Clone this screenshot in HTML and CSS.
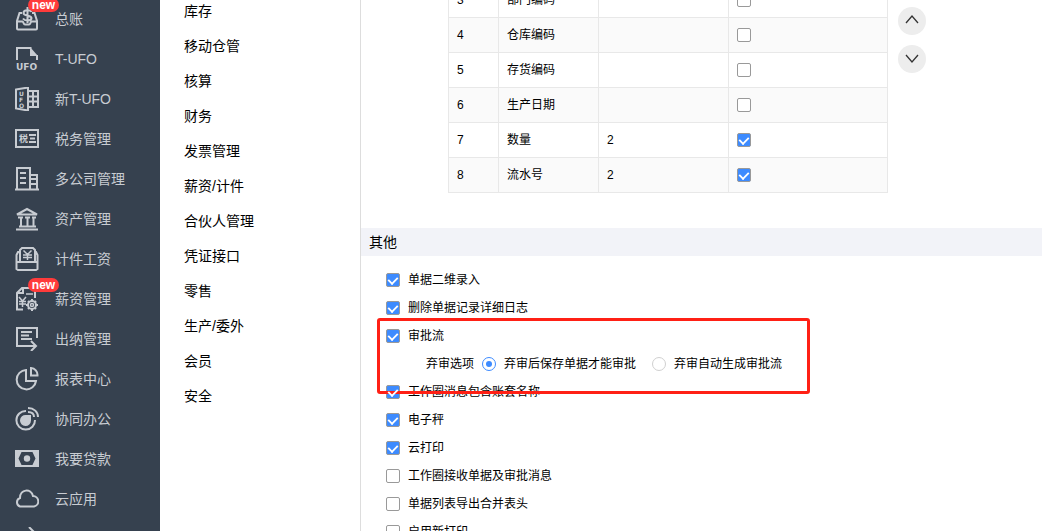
FILE: index.html
```html
<!DOCTYPE html>
<html lang="zh-CN">
<head>
    <meta charset="UTF-8">
    <meta name="viewport" content="width=device-width, initial-scale=1.0">
    <title>选项设置</title>
    <link rel="stylesheet" href="styles.css">
</head>
<body>

<div class="app">
    <nav class="sidebar">
        <a href="#">
            <svg viewBox="0 0 24 24"><path d="M7 6H4.500L2 14v7.500a1 1 0 0 0 1 1h18a1 1 0 0 0 1-1V14L19.500 6H17M2 14.500h5.500c1 0 1 3 2.500 3h4c1.500 0 1.500-3 2.500-3H22M16.500 5c-1-2.500-8-2.500-8 1s8 2 8 5-6.500 3.500-8.500 .5M12.500 0v16"/></svg>
            <span>总账</span>
            <em class="badge">new</em>
        </a>
        <a href="#">
            <svg viewBox="0 0 24 24"><path d="M2 13V1h14.500M22 8v5"/><path class="fill" d="M15 0l8 9h-8z"/><text x="1" y="23">UFO</text></svg>
            <span>T-UFO</span>
        </a>
        <a href="#">
            <svg viewBox="0 0 24 24"><path d="M1 2.500l12-2v23l-12-2zM13 4h10v16H13M13 9.500h10M13 14.500h10M18 4v16"/><text class="tiny" x="4" y="9">U</text><text class="tiny" x="4" y="15">F</text><text class="tiny" x="4" y="21">O</text></svg>
            <span>新T-UFO</span>
        </a>
        <a href="#">
            <svg viewBox="0 0 24 24"><path d="M1 3h22v17H1zM14 8h7M15 11.500h5M14 15h7"/><text class="tax" x="4" y="15">税</text></svg>
            <span>税务管理</span>
        </a>
        <a href="#">
            <svg viewBox="0 0 24 24"><path d="M0 22.500h24M2 22V1h13v21M15 8h7v14M5 6h6M5 11h6M5 16h6M16 12h5M16 17h5"/></svg>
            <span>多公司管理</span>
        </a>
        <a href="#">
            <svg viewBox="0 0 24 24"><path d="M2 7.500L12 2l10 5.500zM3 10.500h5M10 10.500h5M17 10.500h4M6 11v9M12.500 11v9M18.500 11v9M4 19.500h17M1 22.500h22"/></svg>
            <span>资产管理</span>
        </a>
        <a href="#">
            <svg viewBox="0 0 24 24"><path d="M5 15V3l2-2h11l2 2v12M5 5H3l-1.500 3v14L3 23h18l1.500-1V8L21 5h-1M1.500 15h21"/><path class="thin" d="M8.500 3.500l4 4 4-4M12.500 7.500V13M8 8h9M8 10.500h9"/></svg>
            <span>计件工资</span>
        </a>
        <a href="#">
            <svg viewBox="0 0 24 24"><path d="M8 22.500H2V6l5-5h13v10M8 1v5H2"/><path class="thin" d="M11 7h7M4 10l3.500 4 3.500-4M7.500 14v6M4 14.500h7M4 17h7"/><circle class="thin" cx="17" cy="18" r="1.500"/><circle cx="17" cy="18" r="4"/><path d="M17 12v2M17 22v2M11 18h2M21 18h2M13 14l1 1M20 21l1 1M21 14l-1 1M14 21l-1 1"/></svg>
            <span>薪资管理</span>
            <em class="badge">new</em>
        </a>
        <a href="#">
            <svg viewBox="0 0 24 24"><path d="M22 11V1H2v18h18M16 14l5 5-5 5M6 5h11M6 8.500h8M6 12h11"/></svg>
            <span>出纳管理</span>
        </a>
        <a href="#">
            <svg viewBox="0 0 24 24"><path d="M11 3a9.700 9.700 0 1 0 10 11H11zM16 1v7.500h6.500A7 7 0 0 0 16 1z"/></svg>
            <span>报表中心</span>
        </a>
        <a href="#">
            <svg viewBox="0 0 24 24"><path d="M11 4a9.300 9.300 0 1 0 9 9M13 1c6 0 10 4 10 9M13 5c4 0 6 2 6 5"/><path class="fill" d="M11 8h5v5.500A5.500 5.500 0 1 1 11 8z"/></svg>
            <span>协同办公</span>
        </a>
        <a href="#">
            <svg viewBox="0 0 24 24"><path d="M1 4h22v15H1z"/><path class="fill" d="M1 4h6l-3.500 7.500L7 19H1zM23 4h-6l3.500 7.500L17 19h6z"/><circle class="fill" cx="12" cy="11.500" r="3.200"/></svg>
            <span>我要贷款</span>
        </a>
        <a href="#">
            <svg viewBox="0 0 24 24"><path d="M5 19.500a4.500 4.500 0 0 1 0-8.500C5 2 16 1 18 9a5.300 5.300 0 0 1 1 10.500z"/></svg>
            <span>云应用</span>
        </a>
        <a href="#">
            <svg viewBox="0 0 24 24"><path d="M2 15c2-8 8-10 17-10M14 0l5 5-5 5"/></svg>
        </a>
    </nav>

    <nav class="submenu">
        <a href="#">库存</a>
        <a href="#">移动仓管</a>
        <a href="#">核算</a>
        <a href="#">财务</a>
        <a href="#">发票管理</a>
        <a href="#">薪资/计件</a>
        <a href="#">合伙人管理</a>
        <a href="#">凭证接口</a>
        <a href="#">零售</a>
        <a href="#">生产/委外</a>
        <a href="#">会员</a>
        <a href="#">安全</a>
    </nav>

    <main class="content">
        <section class="rules">
            <table>
                <tr>
                    <td class="col-no">3</td>
                    <td class="col-name">部门编码</td>
                    <td class="col-len"></td>
                    <td><input type="checkbox" aria-label="部门编码"></td>
                </tr>
                <tr>
                    <td>4</td>
                    <td>仓库编码</td>
                    <td></td>
                    <td><input type="checkbox" aria-label="仓库编码"></td>
                </tr>
                <tr>
                    <td>5</td>
                    <td>存货编码</td>
                    <td></td>
                    <td><input type="checkbox" aria-label="存货编码"></td>
                </tr>
                <tr>
                    <td>6</td>
                    <td>生产日期</td>
                    <td></td>
                    <td><input type="checkbox" aria-label="生产日期"></td>
                </tr>
                <tr>
                    <td>7</td>
                    <td>数量</td>
                    <td>2</td>
                    <td><input type="checkbox" aria-label="数量" checked></td>
                </tr>
                <tr>
                    <td>8</td>
                    <td>流水号</td>
                    <td>2</td>
                    <td><input type="checkbox" aria-label="流水号" checked></td>
                </tr>
            </table>
            <div class="move">
                <button type="button" aria-label="上移"><svg viewBox="0 0 14 14"><path d="M1 10l6-7 6 7"/></svg></button>
                <button type="button" aria-label="下移"><svg viewBox="0 0 14 14"><path d="M1 4l6 7 6-7"/></svg></button>
            </div>
        </section>

        <h2>其他</h2>
        <form class="options">
            <label><input type="checkbox" checked>单据二维录入</label>
            <label><input type="checkbox" checked>删除单据记录详细日志</label>
            <div class="approval">
                <label><input type="checkbox" checked>审批流</label>
                <div class="radios" role="radiogroup" aria-labelledby="abandon">
                    <span id="abandon">弃审选项</span>
                    <label><input type="radio" name="abandon" checked>弃审后保存单据才能审批</label>
                    <label><input type="radio" name="abandon">弃审自动生成审批流</label>
                </div>
                <div class="highlight"></div>
            </div>
            <label><input type="checkbox" checked>工作圈消息包含账套名称</label>
            <label><input type="checkbox" checked>电子秤</label>
            <label><input type="checkbox" checked>云打印</label>
            <label><input type="checkbox">工作圈接收单据及审批消息</label>
            <label><input type="checkbox">单据列表导出合并表头</label>
            <label><input type="checkbox">启用新打印</label>
        </form>
    </main>
</div>

</body>
</html>
```
FILE: styles.css
```css
* {
    box-sizing: border-box;
}

body {
    margin: 0;
    font-family: "Liberation Sans", "Noto Sans CJK SC", sans-serif;
    font-size: 12px;
    color: #000;
    background: #fff;
}

a {
    color: inherit;
    text-decoration: none;
}

.app {
    display: flex;
    height: 100vh;
    overflow: hidden;
}

/* left navigation */
.sidebar {
    flex: none;
    width: 160px;
    margin-top: -1px;
    background: #36414f;
    color: #c8ccd2;
    font-size: 14px;
    line-height: 38px;
}

.sidebar a {
    position: relative;
    display: flex;
    align-items: center;
    gap: 16px;
    height: 40px;
    padding-left: 15px;
}

.sidebar svg {
    flex: none;
    width: 24px;
    height: 24px;
    fill: none;
    stroke: #c8ccd2;
    stroke-width: 2;
}

.sidebar .thin {
    stroke-width: 1.5;
}

.sidebar .fill {
    fill: #c8ccd2;
    stroke: none;
}

.sidebar text {
    fill: #c8ccd2;
    stroke: none;
    font-family: "DejaVu Sans", sans-serif;
    font-size: 9px;
    font-weight: bold;
}

.sidebar .tiny {
    font-size: 6px;
}

.sidebar .tax {
    font-family: "Noto Sans CJK SC", sans-serif;
    font-size: 9px;
}

.badge {
    position: absolute;
    top: -1px;
    left: 28px;
    width: 31px;
    height: 14px;
    border-radius: 7px;
    background: #ff3b3b;
    color: #fff;
    font-size: 12px;
    font-style: normal;
    font-weight: bold;
    line-height: 14px;
    text-align: center;
}

/* second level menu */
.submenu {
    flex: none;
    width: 201px;
    padding-left: 24px;
    border-right: 1px solid #ddd;
    font-size: 14px;
}

.submenu a {
    display: block;
    line-height: 35px;
}

.submenu a:first-child {
    margin-top: -6px;
}

.content {
    flex: 1;
    min-width: 0;
}

/* encoding rules */
.rules {
    display: flex;
    gap: 10px;
    margin-left: 87px;
}

.rules table {
    width: 440px;
    margin-top: -18px;
    border-collapse: collapse;
    table-layout: fixed;
}

.rules td {
    height: 35px;
    padding: 0 8px;
    border: 1px solid #e8e8e8;
    line-height: 32px;
}

.rules tr:nth-child(even) {
    background: #fafafa;
}

.rules .col-no {
    width: 50px;
}

.rules .col-name {
    width: 100px;
}

.rules .col-len {
    width: 130px;
}

.move {
    display: flex;
    flex-direction: column;
    gap: 10px;
    padding-top: 7px;
}

.move button {
    display: grid;
    place-content: center;
    width: 28px;
    height: 28px;
    padding: 0 0 2px;
    border: none;
    border-radius: 50%;
    background: #ededed;
    cursor: pointer;
}

.move svg {
    width: 14px;
    height: 14px;
    fill: none;
    stroke: #333;
    stroke-width: 1.3;
}

/* other options */
h2 {
    margin: 35px 0 0;
    padding-left: 8px;
    background: #f2f3f8;
    font-size: 14px;
    font-weight: normal;
    line-height: 28px;
}

.options {
    padding: 10px 25px;
    line-height: 26px;
}

.options label {
    display: flex;
    align-items: center;
    gap: 8px;
    height: 28px;
}

.approval {
    position: relative;
}

.radios {
    display: flex;
    align-items: center;
    gap: 8px;
    padding-left: 40px;
}

.radios label + label {
    margin-left: 8px;
}

/* frame drawn over the approval options */
.highlight {
    position: absolute;
    top: -4px;
    left: -9px;
    width: 433px;
    height: 76px;
    border: 3px solid #ff2015;
    border-radius: 3px;
    pointer-events: none;
}

input {
    appearance: none;
    display: grid;
    flex: none;
    place-content: center;
    width: 14px;
    height: 14px;
    margin: 0;
    border: 1px solid #999;
    border-radius: 2px;
    background: #fff;
}

input[type="checkbox"]:checked {
    background: #3d8bff;
}

input[type="checkbox"]:checked::after {
    content: "";
    width: 8px;
    height: 5px;
    margin-bottom: 2px;
    border: solid #fff;
    border-width: 0 0 2px 2px;
    transform: rotate(-45deg) scale(0.9);
}

input[type="radio"] {
    border-color: #d0d0d0;
    border-radius: 50%;
}

input[type="radio"]:checked {
    border-color: #3d8bff;
}

input[type="radio"]:checked::after {
    content: "";
    width: 6px;
    height: 6px;
    border-radius: 50%;
    background: #3d8bff;
}
```
